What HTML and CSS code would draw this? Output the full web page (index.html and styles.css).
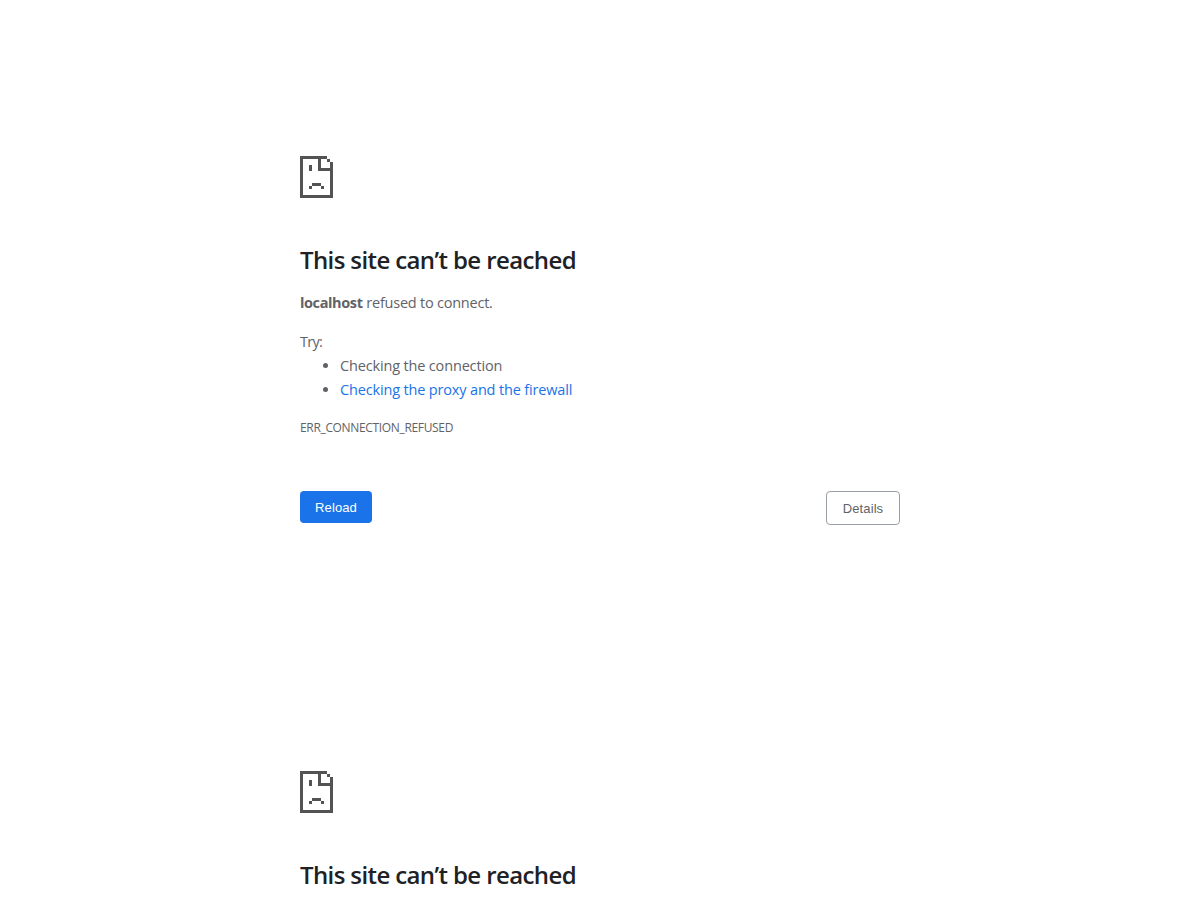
FILE: index.html
```html
<!DOCTYPE html>
<html lang="en">
<head>
<meta charset="utf-8">
<title>localhost</title>
<link rel="stylesheet" href="styles.css">
</head>
<body>
<main class="error-page">
  <svg class="icon" viewBox="0 0 11 14" aria-hidden="true"><path d="M0 0h9v1H7v3h3V2h1v12H0zM1 1v12h9V5H6V1zM9 1h1v1H9zM3 3h1v2H3zM4 9h3v1H4zM3 10h1v1H3zM7 10h1v1H7z" fill-rule="evenodd"/></svg>
  <h1 class="title">This site can’t be reached</h1>
  <p class="summary"><strong class="host">localhost</strong> <span class="reason">refused to connect.</span></p>
  <div class="suggestions">
    <p class="try">Try:</p>
    <ul class="list">
      <li>Checking the connection</li>
      <li><a class="link">Checking the proxy and the firewall</a></li>
    </ul>
  </div>
  <p class="code">ERR_CONNECTION_REFUSED</p>
  <div class="buttons">
    <button class="button primary">Reload</button>
    <button class="button secondary">Details</button>
  </div>
</main>
<section class="error-page clipped">
  <svg class="icon" viewBox="0 0 11 14" aria-hidden="true"><path d="M0 0h9v1H7v3h3V2h1v12H0zM1 1v12h9V5H6V1zM9 1h1v1H9zM3 3h1v2H3zM4 9h3v1H4zM3 10h1v1H3zM7 10h1v1H7z" fill-rule="evenodd"/></svg>
  <h1 class="title">This site can’t be reached</h1>
</section>
</body>
</html>
```
FILE: styles.css
```css
body {
  margin: 0;
  background: #fff;
  color: #5f6368;
  font: 14.5px/24px "Open Sans", "Noto Sans", sans-serif;
}
.error-page {
  box-sizing: border-box;
  width: 600px;
  height: 615px;
  margin: 0 auto;
  padding-top: 156px;
}
.clipped {
  height: 285px;
}
.icon {
  display: block;
  width: 33px;
  height: 42px;
  fill: #535353;
  shape-rendering: crispEdges;
}
.title {
  margin: 47px 0 0;
  color: #202124;
  font-size: 24px;
  font-weight: 600;
  letter-spacing: -0.61px;
  line-height: 30px;
  white-space: nowrap;
}
.summary {
  margin: 16px 0 0;
}
.host {
  font-weight: 700;
  letter-spacing: -0.39px;
}
.reason {
  letter-spacing: -0.23px;
}
.suggestions {
  margin-top: 15px;
}
.try {
  margin: 0;
  letter-spacing: -0.7px;
}
.list {
  margin: 0;
  padding-left: 40px;
  letter-spacing: -0.16px;
}
.link {
  color: #1a73e8;
}
.code {
  margin: 14px 0 0;
  font-size: 12px;
  letter-spacing: -0.34px;
}
.buttons {
  display: flex;
  justify-content: space-between;
  align-items: flex-start;
  margin-top: 51px;
}
.button {
  box-sizing: border-box;
  padding: 1px 0 0;
  border-radius: 4px;
  font: 13px/30px "Liberation Sans", Arial, sans-serif;
  letter-spacing: 0.1px;
}
.primary {
  width: 72px;
  height: 32px;
  border: 0;
  background: #1a73e8;
  color: #fff;
}
.secondary {
  width: 74px;
  height: 34px;
  border: 1px solid #9aa0a6;
  background: #fff;
  color: #5f6368;
}
```
